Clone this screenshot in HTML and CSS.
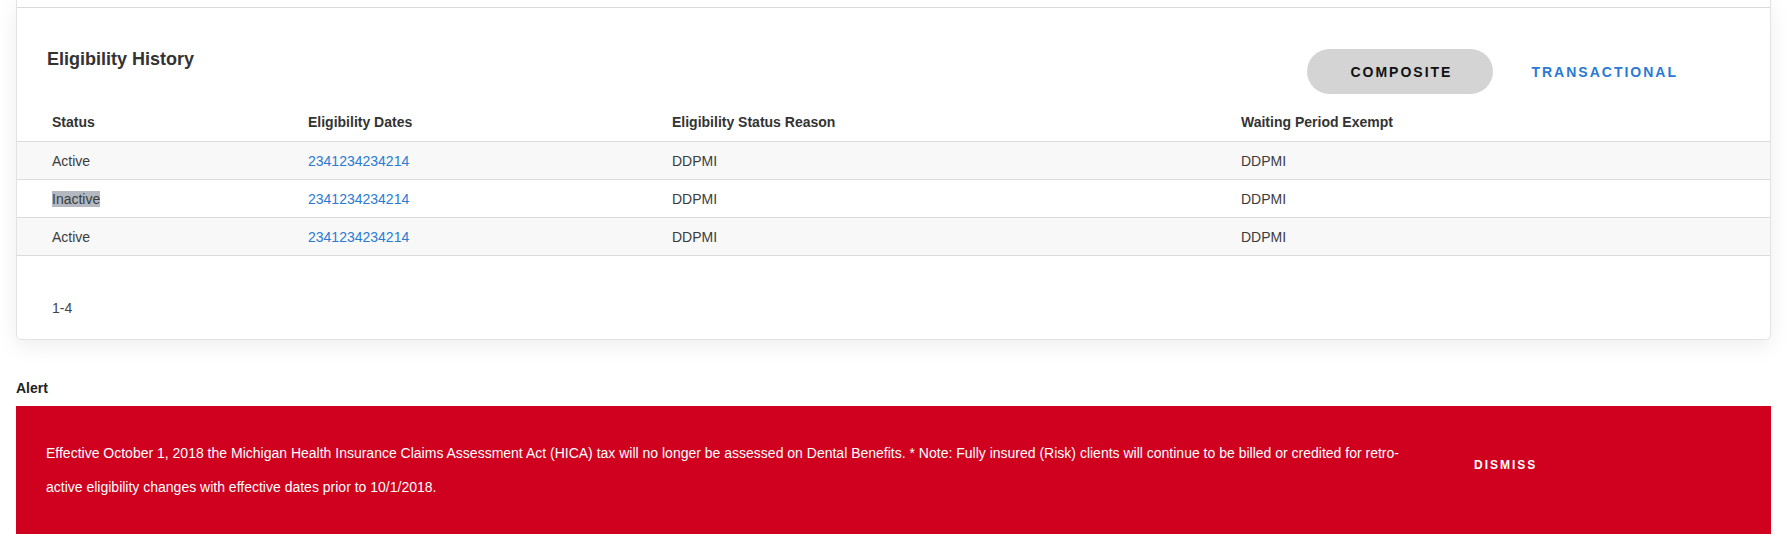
FILE: index.html
```html
<!DOCTYPE html>
<html lang="en">
<head>
<meta charset="utf-8">
<title>Eligibility History</title>
<link rel="stylesheet" href="styles.css">
</head>
<body>
<main class="page">
  <section class="card">
    <div class="card-top"></div>
    <div class="card-head">
      <h2 class="card-title">Eligibility History</h2>
      <div class="toggle">
        <button class="toggle-btn active" type="button">COMPOSITE</button>
        <button class="toggle-btn" type="button">TRANSACTIONAL</button>
      </div>
    </div>
    <div class="grid" role="table">
      <div class="row head" role="row">
        <div role="columnheader">Status</div>
        <div role="columnheader">Eligibility Dates</div>
        <div role="columnheader">Eligibility Status Reason</div>
        <div role="columnheader">Waiting Period Exempt</div>
      </div>
      <div class="row shade" role="row">
        <div role="cell">Active</div>
        <div role="cell"><a class="link" href="#">2341234234214</a></div>
        <div role="cell">DDPMI</div>
        <div role="cell">DDPMI</div>
      </div>
      <div class="row" role="row">
        <div role="cell"><span class="selected">Inactive</span></div>
        <div role="cell"><a class="link" href="#">2341234234214</a></div>
        <div role="cell">DDPMI</div>
        <div role="cell">DDPMI</div>
      </div>
      <div class="row shade" role="row">
        <div role="cell">Active</div>
        <div role="cell"><a class="link" href="#">2341234234214</a></div>
        <div role="cell">DDPMI</div>
        <div role="cell">DDPMI</div>
      </div>
    </div>
    <div class="card-foot">1-4</div>
  </section>

  <h3 class="alert-label">Alert</h3>
  <div class="alert">
    <p class="alert-text">Effective October 1, 2018 the Michigan Health Insurance Claims Assessment Act (HICA) tax will no longer be assessed on Dental Benefits. * Note: Fully insured (Risk) clients will continue to be billed or credited for retro-active eligibility changes with effective dates prior to 10/1/2018.</p>
    <button class="alert-dismiss" type="button">DISMISS</button>
  </div>
</main>
</body>
</html>
```

FILE: styles.css
```css
* {
  box-sizing: border-box;
}

html, body {
  margin: 0;
  padding: 0;
  background: #ffffff;
}

body {
  font-family: "Liberation Sans", Arial, Helvetica, sans-serif;
  color: #3c3c3c;
  font-size: 14px;
}

.page {
  padding: 0 20px 0 16px;
}

.card {
  background: #ffffff;
  border: 1px solid #e2e2e2;
  border-top: none;
  border-radius: 0 0 5px 5px;
  box-shadow: 0 6px 22px rgba(0, 0, 0, 0.07);
}

.card-top {
  height: 8px;
  border-bottom: 1px solid #d9d9d9;
}

.card-head {
  display: flex;
  justify-content: space-between;
  align-items: flex-start;
  padding: 41px 51px 0 30px;
}

.card-title {
  margin: 0;
  font-size: 18px;
  font-weight: 700;
  line-height: 21px;
  color: #333333;
}

.toggle {
  display: flex;
}

.toggle-btn {
  height: 45px;
  padding: 0 41px 0 43px;
  border: none;
  border-radius: 23px;
  background: transparent;
  font-family: "Liberation Sans", Arial, Helvetica, sans-serif;
  font-size: 14px;
  font-weight: 700;
  letter-spacing: 2px;
  color: #2a7ad3;
  cursor: pointer;
}

.toggle-btn + .toggle-btn {
  padding-left: 38px;
}

.toggle-btn.active {
  background: #d4d4d4;
  color: #111111;
}

.grid {
  margin-top: 9px;
}

.row {
  display: grid;
  grid-template-columns: 256px 364px 569px 1fr;
  align-items: center;
  height: 38px;
  padding-left: 35px;
  border-bottom: 1px solid #dcdcdc;
  line-height: 16px;
}

.row.head {
  height: 39px;
  font-weight: 700;
  color: #333333;
}

.row.shade {
  background: #f8f8f8;
}

.link {
  color: #2a7ad3;
  text-decoration: none;
}

.selected {
  background: #b4b9c1;
}

.card-foot {
  padding: 44px 0 23px 35px;
  line-height: 16px;
  color: #444444;
}

.alert-label {
  margin: 40px 0 10px;
  font-size: 14px;
  font-weight: 700;
  line-height: 16px;
  color: #222222;
}

.alert {
  display: flex;
  align-items: center;
  background: #cf011f;
  padding: 30px 30px 30px 30px;
  color: #ffffff;
}

.alert-text {
  flex: 0 0 1378px;
  margin: 0;
  font-size: 14px;
  line-height: 34px;
}

.alert-dismiss {
  margin: 0 0 10px 50px;
  padding: 0;
  border: none;
  background: transparent;
  color: #ffffff;
  font-family: "Liberation Sans", Arial, Helvetica, sans-serif;
  font-size: 12px;
  font-weight: 700;
  letter-spacing: 2px;
  cursor: pointer;
}
```
